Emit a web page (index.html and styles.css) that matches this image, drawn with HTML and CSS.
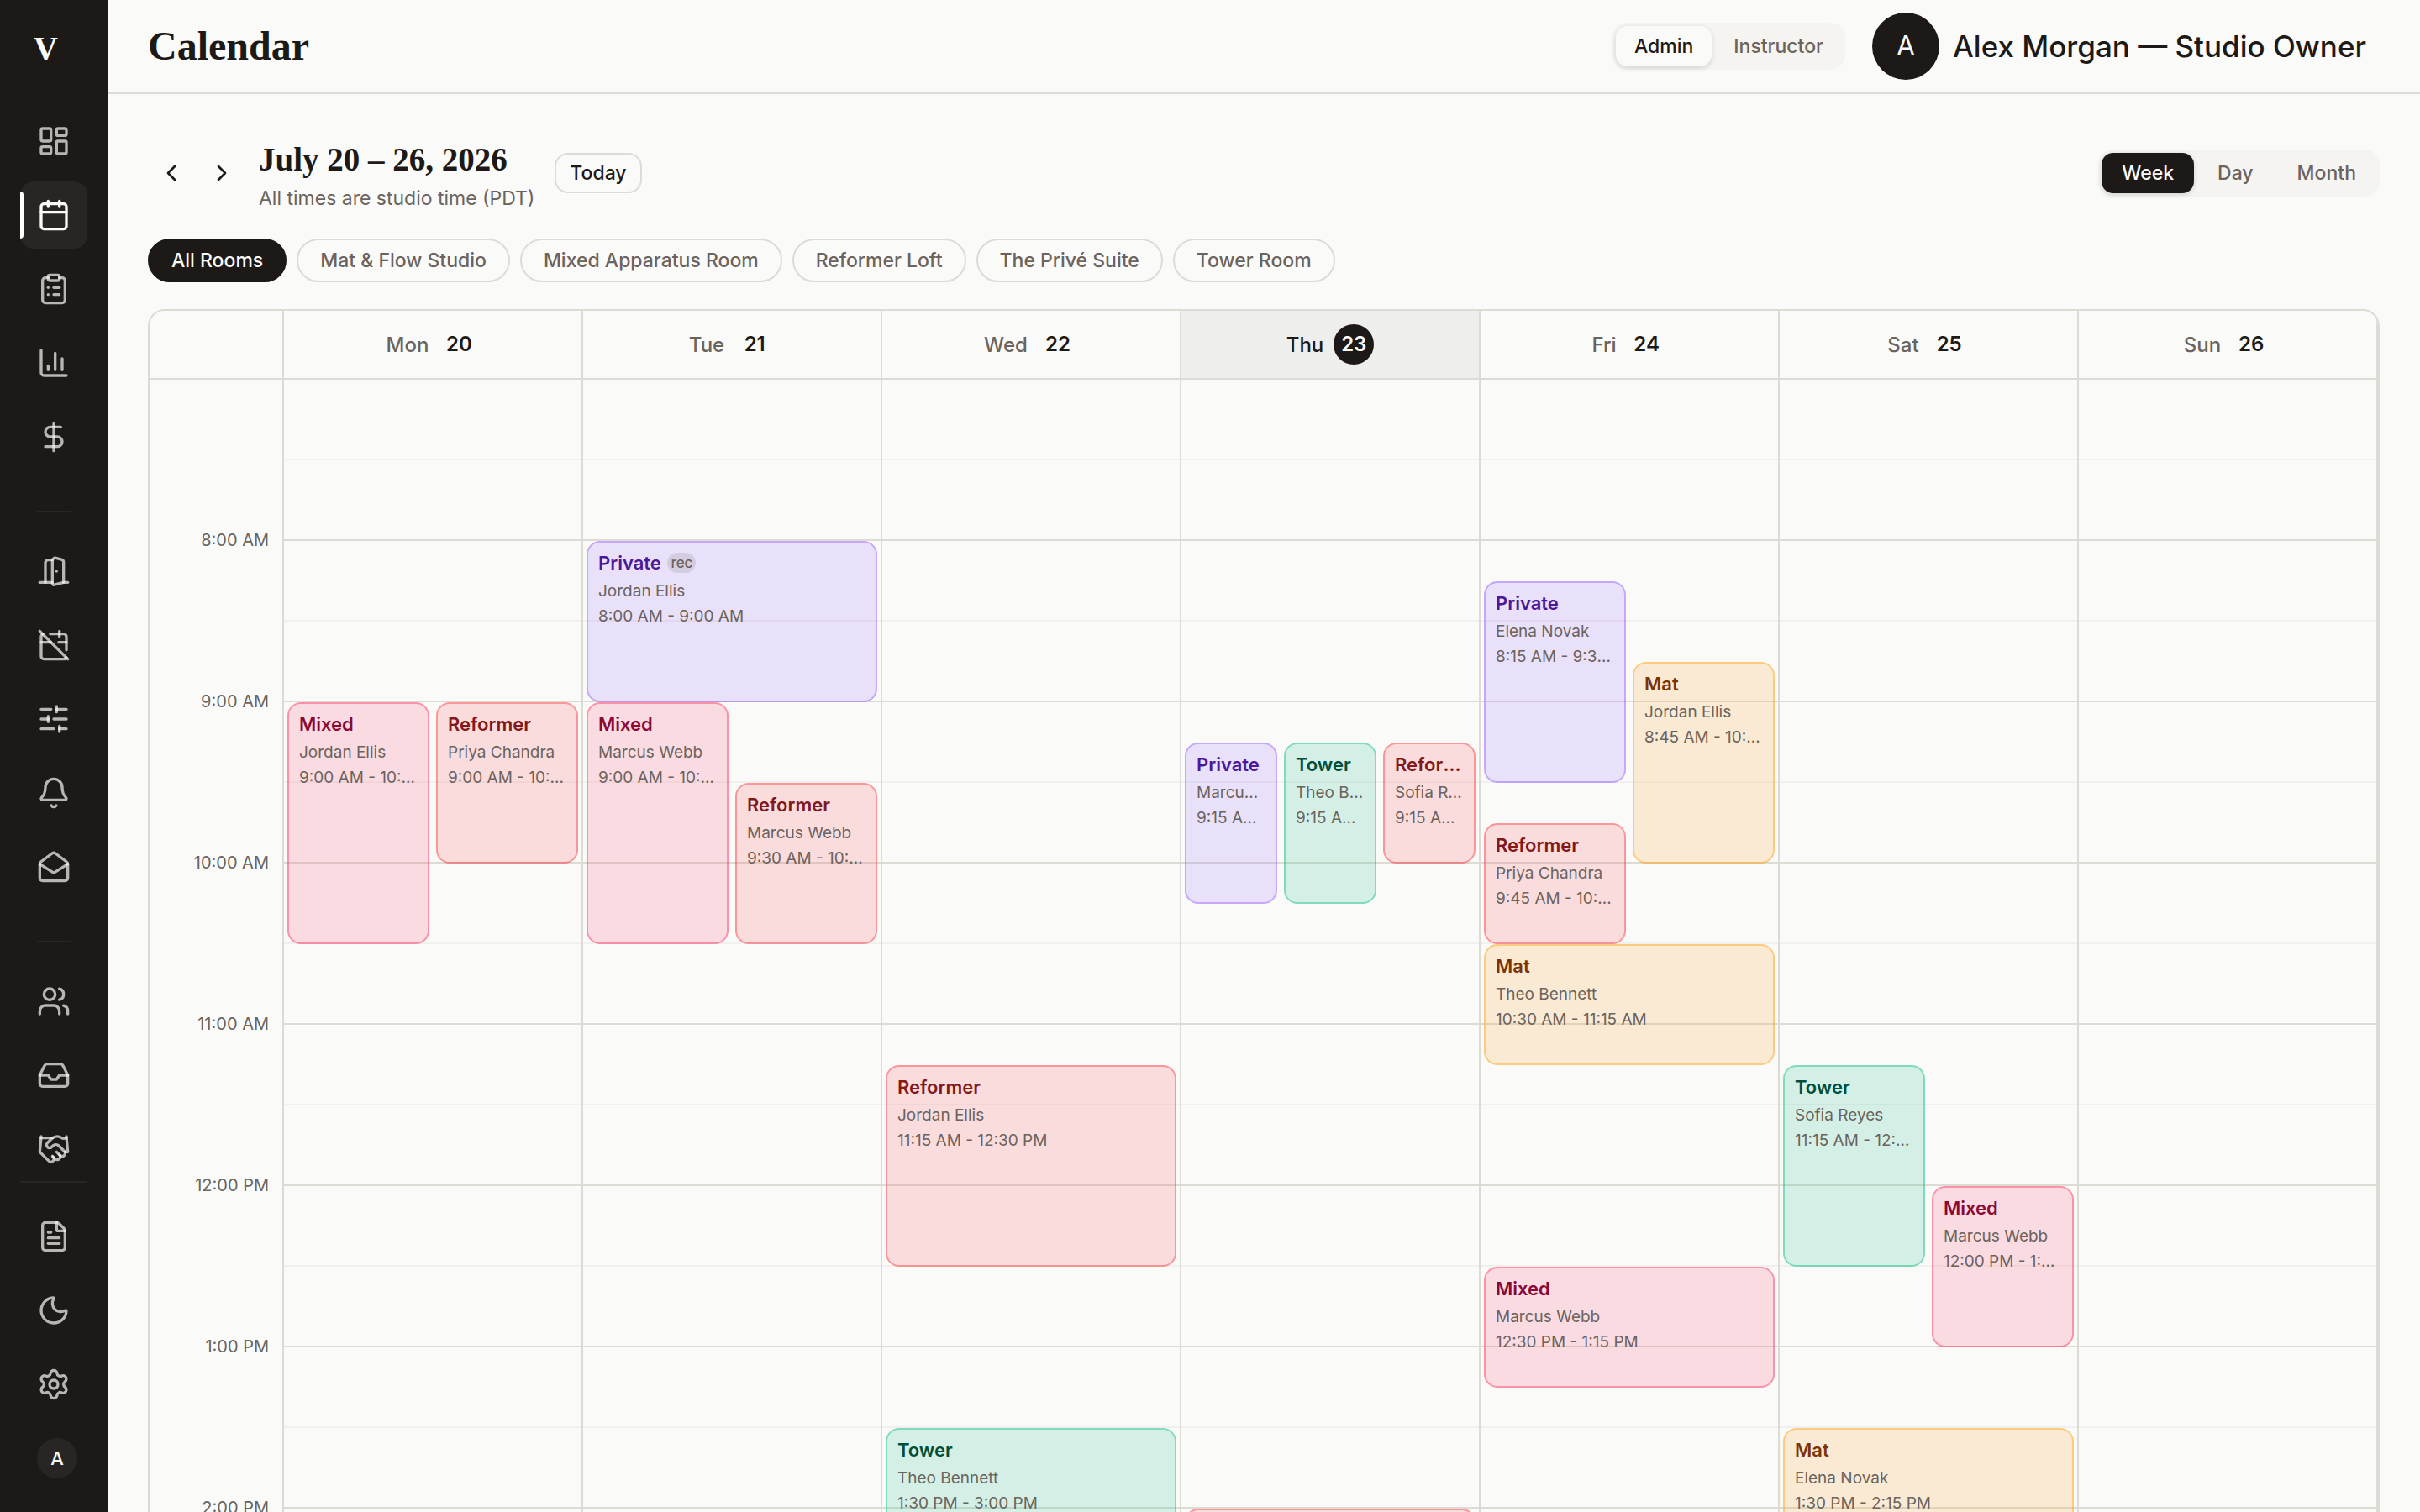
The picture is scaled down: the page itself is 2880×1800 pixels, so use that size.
FILE: index.html
```html
<!DOCTYPE html>
<html lang="en">
  <head>
    <meta charset="UTF-8" />
    <meta name="viewport" content="width=device-width, initial-scale=1.0" />
    <title>Calendar</title>
    <link rel="stylesheet" href="styles.css" />
  </head>

  <body>
    <aside class="sidebar">
      <a class="logo" href="#">V</a>

      <nav class="nav">
        <a href="#" aria-label="Dashboard"><svg class="icon" viewBox="0 0 24 24"><rect width="7" height="9" x="3" y="3" rx="1" /><rect width="7" height="5" x="14" y="3" rx="1" /><rect width="7" height="9" x="14" y="12" rx="1" /><rect width="7" height="5" x="3" y="16" rx="1" /></svg></a>
        <a href="#" class="active" aria-label="Calendar"><svg class="icon" viewBox="0 0 24 24"><path d="M8 2v4" /><path d="M16 2v4" /><rect width="18" height="18" x="3" y="4" rx="2" /><path d="M3 10h18" /></svg></a>
        <a href="#" aria-label="Bookings"><svg class="icon" viewBox="0 0 24 24"><rect width="8" height="4" x="8" y="2" rx="1" /><path d="M16 4h2a2 2 0 0 1 2 2v14a2 2 0 0 1-2 2H6a2 2 0 0 1-2-2V6a2 2 0 0 1 2-2h2" /><path d="M12 11h4" /><path d="M12 16h4" /><path d="M8 11h.01" /><path d="M8 16h.01" /></svg></a>
        <a href="#" aria-label="Reports"><svg class="icon" viewBox="0 0 24 24"><path d="M3 3v16a2 2 0 0 0 2 2h16" /><path d="M18 17V9" /><path d="M13 17V5" /><path d="M8 17v-3" /></svg></a>
        <a href="#" aria-label="Payments"><svg class="icon" viewBox="0 0 24 24"><path d="M12 2v20" /><path d="M17 5H9.5a3.5 3.5 0 0 0 0 7h5a3.5 3.5 0 0 1 0 7H6" /></svg></a>
        <hr />
        <a href="#" aria-label="Rooms"><svg class="icon" viewBox="0 0 24 24"><path d="M11 20H2" /><path d="M11 4.562v16.157a1 1 0 0 0 1.242.97L19 20V5.562a2 2 0 0 0-1.515-1.94l-4-1A2 2 0 0 0 11 4.561z" /><path d="M11 4H8a2 2 0 0 0-2 2v14" /><path d="M14 12h.01" /><path d="M22 20h-3" /></svg></a>
        <a href="#" aria-label="Closures"><svg class="icon" viewBox="0 0 24 24"><path d="M4.2 4.2A2 2 0 0 0 3 6v14a2 2 0 0 0 2 2h14a2 2 0 0 0 1.82-1.18" /><path d="M21 15.5V6a2 2 0 0 0-2-2H9.5" /><path d="M16 2v4" /><path d="M3 10h7" /><path d="M21 10h-5.5" /><path d="m2 2 20 20" /></svg></a>
        <a href="#" aria-label="Policies"><svg class="icon" viewBox="0 0 24 24"><path d="M10 5H3" /><path d="M12 19H3" /><path d="M14 3v4" /><path d="M16 17v4" /><path d="M21 12h-9" /><path d="M21 19h-5" /><path d="M21 5h-7" /><path d="M8 10v4" /><path d="M8 12H3" /></svg></a>
        <a href="#" aria-label="Notifications"><svg class="icon" viewBox="0 0 24 24"><path d="M10.268 21a2 2 0 0 0 3.464 0" /><path d="M3.262 15.326A1 1 0 0 0 4 17h16a1 1 0 0 0 .74-1.673C19.41 13.956 18 12.499 18 8A6 6 0 0 0 6 8c0 4.499-1.411 5.956-2.738 7.326" /></svg></a>
        <a href="#" aria-label="Email"><svg class="icon" viewBox="0 0 24 24"><path d="M21.2 8.4c.5.38.8.97.8 1.6v10a2 2 0 0 1-2 2H4a2 2 0 0 1-2-2V10a2 2 0 0 1 .8-1.6l8-6a2 2 0 0 1 2.4 0l8 6Z" /><path d="m22 10-8.97 5.7a1.94 1.94 0 0 1-2.06 0L2 10" /></svg></a>
        <hr />
        <a href="#" aria-label="Clients"><svg class="icon" viewBox="0 0 24 24"><path d="M16 21v-2a4 4 0 0 0-4-4H6a4 4 0 0 0-4 4v2" /><path d="M16 3.128a4 4 0 0 1 0 7.744" /><path d="M22 21v-2a4 4 0 0 0-3-3.87" /><circle cx="9" cy="7" r="4" /></svg></a>
        <a href="#" aria-label="Inbox"><svg class="icon" viewBox="0 0 24 24"><path d="M22 12h-6l-2 3h-4l-2-3H2" /><path d="M5.45 5.11 2 12v6a2 2 0 0 0 2 2h16a2 2 0 0 0 2-2v-6l-3.45-6.89A2 2 0 0 0 16.76 4H7.24a2 2 0 0 0-1.79 1.11z" /></svg></a>
        <a href="#" aria-label="Partners"><svg class="icon" viewBox="0 0 24 24"><path d="m11 17 2 2a1 1 0 1 0 3-3" /><path d="m14 14 2.5 2.5a1 1 0 1 0 3-3l-3.88-3.88a3 3 0 0 0-4.24 0l-.88.88a1 1 0 1 1-3-3l2.81-2.81a5.79 5.79 0 0 1 7.06-.87l.47.28a2 2 0 0 0 1.42.25L21 4" /><path d="m21 3 1 11h-2" /><path d="M3 3 2 14l6.5 6.5a1 1 0 1 0 3-3" /><path d="M3 4h8" /></svg></a>
      </nav>

      <div class="nav nav-footer">
        <a href="#" aria-label="Documents"><svg class="icon" viewBox="0 0 24 24"><path d="M6 22a2 2 0 0 1-2-2V4a2 2 0 0 1 2-2h8a2.4 2.4 0 0 1 1.704.706l3.588 3.588A2.4 2.4 0 0 1 20 8v12a2 2 0 0 1-2 2z" /><path d="M14 2v5a1 1 0 0 0 1 1h5" /><path d="M10 9H8" /><path d="M16 13H8" /><path d="M16 17H8" /></svg></a>
        <a href="#" aria-label="Dark mode"><svg class="icon" viewBox="0 0 24 24"><path d="M20.985 12.486a9 9 0 1 1-9.473-9.472c.405-.022.617.46.402.803a6 6 0 0 0 8.268 8.268c.344-.215.825-.004.803.401" /></svg></a>
        <a href="#" aria-label="Settings"><svg class="icon" viewBox="0 0 24 24"><path d="M9.671 4.136a2.34 2.34 0 0 1 4.659 0 2.34 2.34 0 0 0 3.319 1.915 2.34 2.34 0 0 1 2.33 4.033 2.34 2.34 0 0 0 0 3.831 2.34 2.34 0 0 1-2.33 4.033 2.34 2.34 0 0 0-3.319 1.915 2.34 2.34 0 0 1-4.659 0 2.34 2.34 0 0 0-3.32-1.915 2.34 2.34 0 0 1-2.33-4.033 2.34 2.34 0 0 0 0-3.831A2.34 2.34 0 0 1 6.35 6.051a2.34 2.34 0 0 0 3.319-1.915" /><circle cx="12" cy="12" r="3" /></svg></a>
        <a href="#" class="account"><span class="account-initial">A</span></a>
      </div>
    </aside>

    <div class="page">
      <header class="topbar">
        <h1>Calendar</h1>
        <div class="segmented roles">
          <button type="button" class="selected">Admin</button>
          <button type="button">Instructor</button>
        </div>
        <button type="button" class="user">
          <span class="avatar">A</span>
          <span>Alex Morgan — Studio Owner</span>
        </button>
      </header>

      <main class="content">
        <div class="toolbar">
          <div class="arrows">
            <button type="button" aria-label="Previous week"><svg class="chevron" viewBox="0 0 24 24"><path d="m15 18-6-6 6-6" /></svg></button>
            <button type="button" aria-label="Next week"><svg class="chevron" viewBox="0 0 24 24"><path d="m9 18 6-6-6-6" /></svg></button>
          </div>
          <div class="range">
            <h2>July 20 – 26, 2026</h2>
            <p>All times are studio time (PDT)</p>
          </div>
          <button type="button" class="today-btn">Today</button>
          <div class="segmented views">
            <button type="button" class="selected">Week</button>
            <button type="button">Day</button>
            <button type="button">Month</button>
          </div>
        </div>

        <div class="rooms">
          <button type="button" class="selected">All Rooms</button>
          <button type="button">Mat &amp; Flow Studio</button>
          <button type="button">Mixed Apparatus Room</button>
          <button type="button">Reformer Loft</button>
          <button type="button">The Privé Suite</button>
          <button type="button">Tower Room</button>
        </div>

        <section class="calendar">
          <div class="week-head">
            <div class="day-head"></div>
            <div class="day-head">Mon <b>20</b></div>
            <div class="day-head">Tue <b>21</b></div>
            <div class="day-head">Wed <b>22</b></div>
            <div class="day-head today">Thu <b>23</b></div>
            <div class="day-head">Fri <b>24</b></div>
            <div class="day-head">Sat <b>25</b></div>
            <div class="day-head">Sun <b>26</b></div>
          </div>

          <!-- one grid row is 15 minutes, row 1 is 7:00 AM -->
          <div class="week-body">
            <div class="hours">
              <span>8:00 AM</span>
              <span>9:00 AM</span>
              <span>10:00 AM</span>
              <span>11:00 AM</span>
              <span>12:00 PM</span>
              <span>1:00 PM</span>
              <span>2:00 PM</span>
              <span>3:00 PM</span>
            </div>

            <div class="day">
              <button type="button" class="event mixed half-1" style="grid-row: 9 / span 6">
                <strong>Mixed</strong>
                <span>Jordan Ellis</span>
                <span>9:00 AM - 10:30 AM</span>
              </button>
              <button type="button" class="event reformer half-2" style="grid-row: 9 / span 4">
                <strong>Reformer</strong>
                <span>Priya Chandra</span>
                <span>9:00 AM - 10:00 AM</span>
              </button>
            </div>

            <div class="day">
              <button type="button" class="event private" style="grid-row: 5 / span 4">
                <strong>Private <em class="rec">rec</em></strong>
                <span>Jordan Ellis</span>
                <span>8:00 AM - 9:00 AM</span>
              </button>
              <button type="button" class="event mixed half-1" style="grid-row: 9 / span 6">
                <strong>Mixed</strong>
                <span>Marcus Webb</span>
                <span>9:00 AM - 10:30 AM</span>
              </button>
              <button type="button" class="event reformer half-2" style="grid-row: 11 / span 4">
                <strong>Reformer</strong>
                <span>Marcus Webb</span>
                <span>9:30 AM - 10:30 AM</span>
              </button>
            </div>

            <div class="day">
              <button type="button" class="event reformer" style="grid-row: 18 / span 5">
                <strong>Reformer</strong>
                <span>Jordan Ellis</span>
                <span>11:15 AM - 12:30 PM</span>
              </button>
              <button type="button" class="event tower" style="grid-row: 27 / span 6">
                <strong>Tower</strong>
                <span>Theo Bennett</span>
                <span>1:30 PM - 3:00 PM</span>
              </button>
            </div>

            <div class="day">
              <button type="button" class="event private third-1" style="grid-row: 10 / span 4">
                <strong>Private</strong>
                <span>Marcus Webb</span>
                <span>9:15 AM - 10:15 AM</span>
              </button>
              <button type="button" class="event tower third-2" style="grid-row: 10 / span 4">
                <strong>Tower</strong>
                <span>Theo Bennett</span>
                <span>9:15 AM - 10:15 AM</span>
              </button>
              <button type="button" class="event reformer third-3" style="grid-row: 10 / span 3">
                <strong>Reformer</strong>
                <span>Sofia Reyes</span>
                <span>9:15 AM - 10:00 AM</span>
              </button>
              <button type="button" class="event reformer" style="grid-row: 29 / span 4" aria-label="Reformer, 2:00 PM"></button>
            </div>

            <div class="day">
              <button type="button" class="event private half-1" style="grid-row: 6 / span 5">
                <strong>Private</strong>
                <span>Elena Novak</span>
                <span>8:15 AM - 9:30 AM</span>
              </button>
              <button type="button" class="event mat half-2" style="grid-row: 8 / span 5">
                <strong>Mat</strong>
                <span>Jordan Ellis</span>
                <span>8:45 AM - 10:00 AM</span>
              </button>
              <button type="button" class="event reformer half-1" style="grid-row: 12 / span 3">
                <strong>Reformer</strong>
                <span>Priya Chandra</span>
                <span>9:45 AM - 10:30 AM</span>
              </button>
              <button type="button" class="event mat" style="grid-row: 15 / span 3">
                <strong>Mat</strong>
                <span>Theo Bennett</span>
                <span>10:30 AM - 11:15 AM</span>
              </button>
              <button type="button" class="event mixed" style="grid-row: 23 / span 3">
                <strong>Mixed</strong>
                <span>Marcus Webb</span>
                <span>12:30 PM - 1:15 PM</span>
              </button>
            </div>

            <div class="day">
              <button type="button" class="event tower half-1" style="grid-row: 18 / span 5">
                <strong>Tower</strong>
                <span>Sofia Reyes</span>
                <span>11:15 AM - 12:30 PM</span>
              </button>
              <button type="button" class="event mixed half-2" style="grid-row: 21 / span 4">
                <strong>Mixed</strong>
                <span>Marcus Webb</span>
                <span>12:00 PM - 1:00 PM</span>
              </button>
              <button type="button" class="event mat" style="grid-row: 27 / span 3">
                <strong>Mat</strong>
                <span>Elena Novak</span>
                <span>1:30 PM - 2:15 PM</span>
              </button>
            </div>

            <div class="day"></div>
          </div>
        </section>
      </main>
    </div>
  </body>
</html>
```

FILE: styles.css
```css
:root {
  --bg: #fafaf8;
  --ink: #1c1917;
  --muted: #6b635d;
  --line: #dcdcd5;
  --soft-line: #f0f0ee;
  --soft: #f5f4f1;
}

* {
  margin: 0;
  padding: 0;
  box-sizing: border-box;
}

body {
  display: flex;
  height: 100vh;
  overflow: hidden;
  font-family: "Inter", "Liberation Sans", sans-serif;
  font-size: 23px;
  color: var(--ink);
  background: var(--bg);
}

button {
  font: inherit;
  color: inherit;
  background: none;
  border: none;
  cursor: pointer;
}

a {
  color: inherit;
  text-decoration: none;
}

svg {
  fill: none;
  stroke: currentColor;
  stroke-width: 2;
  stroke-linecap: round;
  stroke-linejoin: round;
}

/* sidebar */
.sidebar {
  display: flex;
  flex-direction: column;
  flex: none;
  width: 128px;
  background: var(--ink);
  color: rgba(250, 250, 248, 0.7);
}

.logo {
  flex: none;
  height: 112px;
  padding-left: 40px;
  font-family: "Liberation Serif", serif;
  font-size: 40px;
  font-weight: bold;
  line-height: 116px;
  color: var(--bg);
}

.nav {
  display: flex;
  flex-direction: column;
  flex: 1;
  gap: 8px;
  min-height: 0;
  padding: 16px 24px 0;
  overflow: hidden;
}

.nav a {
  display: flex;
  align-items: center;
  justify-content: center;
  flex: none;
  height: 80px;
  border-radius: 16px;
}

.nav a.active {
  position: relative;
  background: #292524;
  color: var(--bg);
}

.nav a.active::before {
  content: "";
  position: absolute;
  left: 0;
  width: 4px;
  height: 56px;
  border-radius: 0 4px 4px 0;
  background: white;
}

.nav hr {
  flex: none;
  width: 40px;
  margin: 40px auto 22px;
  border: none;
  border-top: 2px solid #292524;
}

.icon {
  width: 40px;
  height: 40px;
}

.nav-footer {
  flex: none;
  margin: 0 24px;
  padding: 24px 0;
  border-top: 2px solid #292524;
}

.nav a.account {
  justify-content: flex-start;
  padding-left: 20px;
}

.account-initial {
  width: 48px;
  height: 48px;
  border-radius: 50%;
  background: #292524;
  color: var(--bg);
  font-size: 22px;
  font-weight: 500;
  line-height: 48px;
  text-align: center;
}

/* top bar */
.page {
  display: flex;
  flex-direction: column;
  flex: 1;
  min-width: 0;
}

.topbar {
  display: flex;
  align-items: center;
  flex: none;
  gap: 16px;
  height: 112px;
  padding: 0 48px;
  border-bottom: 2px solid var(--line);
}

h1,
h2 {
  font-family: "Liberation Serif", serif;
  font-weight: bold;
}

h1 {
  flex: 1;
  font-size: 48px;
  line-height: 64px;
}

.segmented {
  display: flex;
  gap: 4px;
  padding: 4px;
  border-radius: 18px;
  background: var(--soft);
}

.segmented button {
  height: 48px;
  border-radius: 14px;
  font-weight: 500;
  color: var(--muted);
}

.roles button {
  padding: 0 22px;
}

.views button {
  padding: 0 24px;
}

.roles .selected {
  background: var(--bg);
  color: var(--ink);
  box-shadow: 0 2px 6px rgba(0, 0, 0, 0.14);
}

.views .selected {
  background: var(--ink);
  color: var(--bg);
  box-shadow: 0 2px 6px rgba(0, 0, 0, 0.14);
}

.user {
  display: flex;
  align-items: center;
  gap: 16px;
  padding: 0 16px;
  font-size: 35px;
  font-weight: 500;
}

.avatar {
  width: 80px;
  height: 80px;
  border-radius: 50%;
  background: var(--ink);
  color: var(--bg);
  font-size: 32px;
  font-weight: 400;
  line-height: 80px;
  text-align: center;
}

/* week toolbar */
.content {
  flex: 1;
  min-height: 0;
  padding: 48px;
  overflow-y: auto;
  scrollbar-width: none;
}

.toolbar {
  display: flex;
  align-items: center;
}

.arrows {
  display: flex;
  gap: 4px;
  margin-right: 16px;
}

.arrows button {
  display: flex;
  align-items: center;
  justify-content: center;
  width: 56px;
  height: 56px;
}

.chevron {
  width: 32px;
  height: 32px;
}

h2 {
  font-size: 39px;
  line-height: 60px;
}

.range p {
  line-height: 32px;
  color: var(--muted);
}

.today-btn {
  height: 48px;
  margin-left: 24px;
  padding: 0 16px;
  border: 2px solid var(--line);
  border-radius: 16px;
  font-weight: 500;
}

.views {
  margin-left: auto;
}

.rooms {
  display: flex;
  gap: 12px;
  margin: 32px 0;
}

.rooms button {
  height: 52px;
  padding: 0 26px;
  border: 2px solid var(--line);
  border-radius: 26px;
  font-weight: 500;
  color: var(--muted);
}

.rooms .selected {
  border-color: var(--ink);
  background: var(--ink);
  color: var(--bg);
}

/* week grid */
.calendar {
  border: 2px solid var(--line);
  border-radius: 20px;
  overflow: hidden;
}

.week-head,
.week-body {
  display: grid;
  grid-template-columns: 160px repeat(7, minmax(0, 1fr));
}

.day-head {
  display: flex;
  align-items: center;
  justify-content: center;
  gap: 12px;
  height: 82px;
  border-right: 2px solid var(--line);
  border-bottom: 2px solid var(--line);
  font-size: 24px;
  font-weight: 500;
  color: var(--muted);
}

.day-head b {
  width: 48px;
  height: 48px;
  border-radius: 50%;
  font-weight: 600;
  line-height: 48px;
  text-align: center;
  color: var(--ink);
}

.day-head.today {
  background: #eeeeec;
  color: var(--ink);
}

.day-head.today b {
  background: var(--ink);
  color: var(--bg);
}

.hours {
  padding: 95px 16px 0 0;
  border-right: 2px solid var(--line);
  font-size: 20px;
  line-height: 192px;
  text-align: right;
  color: var(--muted);
}

.hours span {
  display: block;
}

.day {
  display: grid;
  grid-template-columns: repeat(6, minmax(0, 1fr));
  grid-template-rows: repeat(36, 48px);
  column-gap: 8px;
  padding: 0 4px;
  border-right: 2px solid var(--line);
  background: repeating-linear-gradient(
    transparent 0 94px,
    var(--soft-line) 94px 96px,
    transparent 96px 190px,
    var(--line) 190px 192px
  );
}

.event {
  display: flex;
  flex-direction: column;
  grid-column: 1 / -1;
  min-width: 0;
  padding: 8px 12px;
  border: 2px solid;
  border-radius: 16px;
  font-size: 19px;
  line-height: 30px;
  text-align: left;
}

.event strong {
  margin-bottom: 2px;
  font-size: 22px;
  font-weight: 600;
  line-height: 33px;
}

.event span {
  color: var(--muted);
}

.event strong,
.event span {
  overflow: hidden;
  text-overflow: ellipsis;
  white-space: nowrap;
}

.rec {
  display: inline-block;
  margin: 4px 0 0 2px;
  padding: 0 4px;
  border-radius: 12px;
  background: rgba(28, 25, 23, 0.1);
  font-size: 17px;
  font-style: normal;
  font-weight: 500;
  line-height: 24px;
  vertical-align: top;
  color: var(--muted);
}

.half-1 {
  grid-column: 1 / span 3;
}

.half-2 {
  grid-column: 4 / span 3;
}

.third-1 {
  grid-column: 1 / span 2;
}

.third-2 {
  grid-column: 3 / span 2;
}

.third-3 {
  grid-column: 5 / span 2;
}

.private {
  background: rgba(142, 81, 255, 0.15);
  border-color: rgba(142, 81, 255, 0.4);
  color: #4d179a;
}

.mixed {
  background: rgba(255, 32, 86, 0.14);
  border-color: rgba(255, 32, 86, 0.4);
  color: #8b0836;
}

.reformer {
  background: rgba(255, 44, 54, 0.14);
  border-color: rgba(251, 44, 54, 0.4);
  color: #82181a;
}

.tower {
  background: rgba(0, 188, 125, 0.15);
  border-color: rgba(0, 188, 125, 0.4);
  color: #004f3b;
}

.mat {
  background: rgba(255, 150, 0, 0.15);
  border-color: rgba(254, 154, 0, 0.4);
  color: #7b3306;
}
```
